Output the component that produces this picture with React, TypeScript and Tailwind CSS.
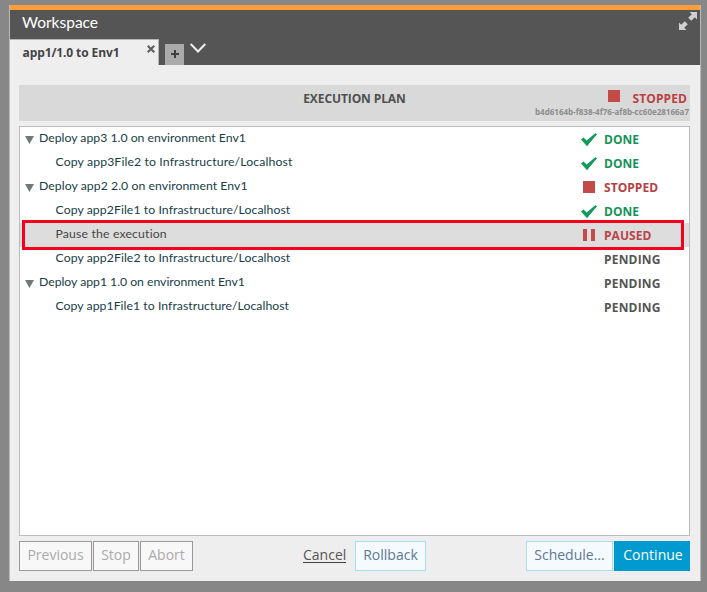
import React from "react";

type Status = "DONE" | "STOPPED" | "PAUSED" | "PENDING";

interface Step {
  label: string;
  group?: boolean;
  status: Status;
  tracking: string;
}

const steps: Step[] = [
  { label: "Deploy app3 1.0 on environment Env1", group: true, status: "DONE", tracking: "tracking-[0px]" },
  { label: "Copy app3File2 to Infrastructure/Localhost", status: "DONE", tracking: "tracking-[0.12px]" },
  { label: "Deploy app2 2.0 on environment Env1", group: true, status: "STOPPED", tracking: "tracking-[0.05px]" },
  { label: "Copy app2File1 to Infrastructure/Localhost", status: "DONE", tracking: "tracking-[0.07px]" },
  { label: "Pause the execution", status: "PAUSED", tracking: "tracking-[0.16px]" },
  { label: "Copy app2File2 to Infrastructure/Localhost", status: "PENDING", tracking: "tracking-[0.07px]" },
  { label: "Deploy app1 1.0 on environment Env1", group: true, status: "PENDING", tracking: "tracking-[-0.03px]" },
  { label: "Copy app1File1 to Infrastructure/Localhost", status: "PENDING", tracking: "tracking-[0.04px]" },
];

const statusColor: Record<Status, string> = {
  DONE: "text-[#159355]",
  STOPPED: "text-[#b54043]",
  PAUSED: "text-[#b94447]",
  PENDING: "text-[#555555]",
};

function StatusIcon({ status }: { status: Status }) {
  if (status === "DONE")
    return (
      <svg width="16" height="14" viewBox="0 0 16 14" fill="#159a5b">
        <path d="M0 6.5 2.5 4.5 5.7 7.5 14.5 0 16 1.2 6 13.2Z" />
      </svg>
    );
  if (status === "STOPPED") return <span className="h-3 w-3 bg-[#c24b49]" />;
  if (status === "PAUSED")
    return (
      <span className="flex h-3 w-3 justify-between">
        <span className="w-1 bg-[#c24b49]" />
        <span className="w-1 bg-[#c24b49]" />
      </span>
    );
  return null;
}

function StepRow({ step }: { step: Step }) {
  const paused = step.status === "PAUSED";
  return (
    <div className={`relative flex h-6 ${paused ? "bg-[#dddddd]" : ""}`}>
      <div className="w-[19px] shrink-0 pt-[9px] pl-[5px]">
        {step.group && (
          <svg className="block" width="9" height="8" viewBox="0 0 9 8" fill="#737777">
            <path d="M0 0H9L4.5 8Z" />
          </svg>
        )}
      </div>
      <div className={`flex-1 whitespace-nowrap font-['Lato',sans-serif] text-[12.25px] leading-[21px] ${step.group ? "" : "pl-[16.5px]"} ${paused ? "text-[#464646]" : "text-[#183d47]"}`}>
        <span className={step.tracking}>{step.label}</span>
      </div>
      <div className="flex w-[23px] shrink-0 justify-center pr-[7px] pt-1.5">
        <StatusIcon status={step.status} />
      </div>
      <div className={`w-[85px] shrink-0 pt-px text-xs font-bold leading-6 ${step.status === "PENDING" ? "tracking-[0.2px]" : "tracking-[0.05px]"} ${statusColor[step.status]}`}>{step.status}</div>
      {paused && <div className="absolute -top-[3px] left-0.5 h-[30px] w-[662px] border-[3px] border-[#f5001d]" />}
    </div>
  );
}

const button = "h-[30px] border text-sm leading-[25px] text-center whitespace-nowrap pb-[3px]";

export default function App() {
  return (
    <div className="h-[592px] w-[707px] overflow-hidden bg-[#878787] pt-[5px] pl-[9px] font-['Open_Sans','Noto_Sans',sans-serif]">
      <div className="flex h-[576px] w-[692px] flex-col border-x border-x-[#bababa] bg-[#eeeeee]">
        <div className="h-[5px] bg-[#ff9d3c]" />
        <header className="h-[55px] bg-[#555555]">
          <div className="flex h-[29px] justify-between">
            <h1 className="pl-3 font-['Lato',sans-serif] text-[15.5px] leading-[25px] text-white">Workspace</h1>
            <svg className="mt-[2px] mr-[3px]" width="18" height="18" viewBox="0 0 18 18" fill="#d0d0d0">
              <path d="M10.5 0H18V7.5L15.8 5.3 12.2 8.7 9.2 5.8 12.8 2.3Z" />
              <path d="M0 18V10.5L2.2 12.7 5.8 9.3 8.8 12.2 5.2 15.7 7.5 18Z" />
            </svg>
          </div>
          <div className="flex h-[26px]">
            <div className="flex w-[149px] justify-between border-t border-r border-[#b5b5b5] bg-[#eeeeee] pl-[12.5px] text-xs font-bold leading-[25px] tracking-[-0.1px] text-[#444444]">
              <span>app1/1.0 to Env1</span>
              <svg className="mt-[5px] mr-[3px]" width="8" height="8" viewBox="0 0 8 8" stroke="#606060" strokeWidth="2.1">
                <path d="M.7.7 7.3 7.3M7.3.7.7 7.3" />
              </svg>
            </div>
            <div className="mt-[5px] ml-1.5 flex h-[21px] w-[19px] justify-center bg-[#aaaaaa] pt-[6px]">
              <svg width="8" height="8" viewBox="0 0 8 8" stroke="#3f3f3f" strokeWidth="2">
                <path d="M4 0V8M0 4H8" />
              </svg>
            </div>
            <svg className="mt-1 ml-[6px]" width="16" height="11" viewBox="0 0 16 11" fill="none" stroke="#eeeeee" strokeWidth="2">
              <path d="M.7 1 8 8.5 15.3 1" />
            </svg>
          </div>
        </header>

        <main className="flex flex-1 flex-col pr-[10px] pl-[9px] pt-5">
          <section className="grid h-9 grid-cols-3 bg-[#d9d9d9]">
            <div />
            <h2 className="text-center text-xs font-bold leading-[27px] tracking-[-0.1px] text-[#505050]">EXECUTION PLAN</h2>
            <div className="flex flex-col items-end">
              <div className="flex h-[22px] items-start pr-[3px] pt-[5px]">
                <span className="mr-[13px] h-3 w-3 bg-[#c24b49]" />
                <span className="text-xs font-bold leading-[17px] tracking-[0.1px] text-[#b94144]">STOPPED</span>
              </div>
              <div className="whitespace-nowrap pr-px text-[8px] font-bold leading-[10px] text-[#8c8c8c]">b4d6164b-f838-4f76-af8b-cc60e28166a7</div>
            </div>
          </section>

          <section className="mt-[5px] h-[410px] border border-[#b9bdbc] bg-white">
            {steps.map((step) => (
              <StepRow key={step.label} step={step} />
            ))}
          </section>

          <footer className="mt-[5px] flex">
            <button className={`${button} w-[73px] border-[#999999] bg-[#f8f8f8] text-[#aaaaaa]`}>Previous</button>
            <button className={`${button} ml-px w-[46px] border-[#999999] bg-[#f8f8f8] text-[#aaaaaa]`}>Stop</button>
            <button className={`${button} ml-px w-[53px] border-[#999999] bg-[#f8f8f8] text-[#aaaaaa]`}>Abort</button>
            <button className="ml-[110px] h-[22px] w-[43px] border-b border-[#444444] text-sm leading-7 text-[#555555]">Cancel</button>
            <button className={`${button} ml-[9px] w-[71px] border-[#a5dff2] bg-[#f5faff] text-[#5c7893]`}>Rollback</button>
            <button className={`${button} ml-auto w-[87px] border-[#a5dff2] bg-[#f5faff] text-[#5c7893]`}>Schedule...</button>
            <button className={`${button} ml-px w-[76px] border-[#0099d0] bg-[#0099d0] pl-0.5 text-white`}>Continue</button>
          </footer>
        </main>
      </div>
    </div>
  );
}
